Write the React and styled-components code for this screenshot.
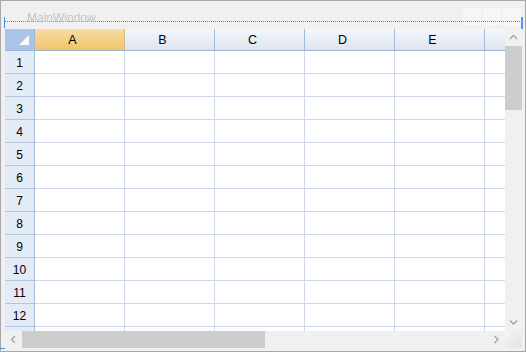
import React from 'react';
import styled, { createGlobalStyle } from 'styled-components';

const Global = createGlobalStyle`
  html, body { margin: 0; padding: 0; background: #ffffff; }
  body { font-family: "Liberation Sans", Arial, sans-serif; }
  * { box-sizing: border-box; }
`;

const Window = styled.div`
  position: relative;
  width: 526px;
  height: 352px;
  background: #f0f0f0;
  border: 1px solid #a8a8a8;
  display: flex;
  flex-direction: column;
`;

const TitleBar = styled.div`
  position: relative;
  height: 28px;
  flex: none;
`;

const TitleLine = styled.div`
  position: relative;
  z-index: 1;
  margin: 0 3px 0 4px;
  height: 21px;
  border-bottom: 1px dotted #4f86e8;
  padding: 12px 0 0 22px;
`;

const Title = styled.span`
  display: block;
  font-family: "Liberation Sans", Arial, sans-serif;
  font-size: 12px;
  line-height: 10px;
  color: #c4c4c4;
`;

const WinButtons = styled.div`
  position: absolute;
  top: 7px;
  right: 4px;
  display: flex;
  gap: 2px;
`;

const WinButton = styled.div`
  width: 18px;
  height: 18px;
  border-radius: 2px;
  background: #f6f6f6;
`;

const Marker = styled.div`
  position: absolute;
  background: #4f86e8;
  z-index: 2;
  ${p => p.$side === 'left' && 'left: 3px; top: 16px; width: 1px; height: 11px;'}
  ${p => p.$side === 'right' && 'right: 2px; top: 16px; width: 2px; height: 12px; background: #5a90f2;'}
  ${p => p.$side === 'bottom' && 'left: -1px; bottom: 2px; width: 5px; height: 1px;'}
`;

const Body = styled.div`
  margin: 0 3px 0 4px;
  display: grid;
  grid-template-columns: 500px 17px;
  grid-template-rows: 302px 17px;
`;

const SheetArea = styled.div`
  overflow: hidden;
  background: #ffffff;
`;

const Sheet = styled.div`
  display: grid;
  grid-template-columns: 30px repeat(6, 90px);
  grid-template-rows: 22px repeat(13, 23px);
  font-size: 12px;
  color: #000;
`;

const Corner = styled.div`
  position: relative;
  background: #a9c4e9;
  border-right: 1px solid #9db6d6;
  border-bottom: 1px solid #9db6d6;
  &::after {
    content: '';
    position: absolute;
    right: 5px;
    bottom: 5px;
    width: 0;
    height: 0;
    border-left: 10px solid transparent;
    border-bottom: 10px solid #ffffff;
  }
`;

const ColHeader = styled.div`
  display: flex;
  align-items: center;
  justify-content: center;
  font-size: 12.5px;
  background: ${p => p.$selected
    ? 'linear-gradient(#f9dba3, #f1c468)'
    : 'linear-gradient(#f5f7fb, #dde4ef)'};
  border-right: 1px solid ${p => p.$selected ? '#d1b98f' : '#a3bcd8'};
  border-bottom: 1px solid #9db4cf;
  padding: 1px 14px 0 0;
`;

const RowHeader = styled.div`
  display: flex;
  align-items: center;
  justify-content: center;
  background: #e3ebf6;
  border-right: 1px solid #a6bcd9;
  border-bottom: 1px solid #b3c6e0;
  padding-top: 2px;
`;

const Cell = styled.div`
  background: #ffffff;
  border-right: 1px solid #cdd8e8;
  border-bottom: 1px solid #cdd8e8;
`;

const VScroll = styled.div`
  display: flex;
  flex-direction: column;
  background: #f0f0f0;
`;

const HScroll = styled.div`
  display: flex;
  background: #f0f0f0;
`;

const ArrowBtn = styled.div`
  flex: none;
  width: 17px;
  height: 17px;
  display: flex;
  align-items: center;
  justify-content: center;
`;

const VThumbSpace = styled.div`
  flex: 1;
  display: flex;
  flex-direction: column;
`;

const VThumb = styled.div`
  height: 64px;
  background: #cdcdcd;
`;

const HThumbSpace = styled.div`
  flex: 1;
  display: flex;
`;

const HThumb = styled.div`
  width: 243px;
  height: 17px;
  background: #cdcdcd;
`;

const ScrollCorner = styled.div`
  background: linear-gradient(135deg, #f4f5f7 0%, #e0e3e8 100%);
`;

const Chevron = ({ dir }) => {
  const paths = {
    up: 'M1 5 L4.5 1.5 L8 5',
    down: 'M1 1.5 L4.5 5 L8 1.5',
    left: 'M5 1 L1.5 4.5 L5 8',
    right: 'M1.5 1 L5 4.5 L1.5 8',
  };
  const vertical = dir === 'up' || dir === 'down';
  return (
    <svg width={vertical ? 9 : 7} height={vertical ? 7 : 9} viewBox={vertical ? '0 0 9 7' : '0 0 7 9'}>
      <path d={paths[dir]} fill="none" stroke="#a2a2a2" strokeWidth="1.3" />
    </svg>
  );
};

const columns = ['A', 'B', 'C', 'D', 'E', ''];
const rows = Array.from({ length: 13 }, (_, i) => i + 1);

export default function App() {
  return (
    <>
      <Global />
      <Window>
        <TitleBar>
          <WinButtons>
            <WinButton />
            <WinButton />
            <WinButton />
          </WinButtons>
          <TitleLine>
            <Title>MainWindow</Title>
          </TitleLine>
          <Marker $side="left" />
          <Marker $side="right" />
        </TitleBar>
        <Body>
          <SheetArea>
            <Sheet>
              <Corner />
              {columns.map((c, i) => (
                <ColHeader key={i} $selected={c === 'A'}>{c}</ColHeader>
              ))}
              {rows.map(r => (
                <React.Fragment key={r}>
                  <RowHeader>{r <= 12 ? r : ''}</RowHeader>
                  {columns.map((c, i) => <Cell key={i} />)}
                </React.Fragment>
              ))}
            </Sheet>
          </SheetArea>
          <VScroll>
            <ArrowBtn><Chevron dir="up" /></ArrowBtn>
            <VThumbSpace><VThumb /></VThumbSpace>
            <ArrowBtn><Chevron dir="down" /></ArrowBtn>
          </VScroll>
          <HScroll>
            <ArrowBtn><Chevron dir="left" /></ArrowBtn>
            <HThumbSpace><HThumb /></HThumbSpace>
            <ArrowBtn><Chevron dir="right" /></ArrowBtn>
          </HScroll>
          <ScrollCorner />
        </Body>
        <Marker $side="bottom" />
      </Window>
    </>
  );
}
